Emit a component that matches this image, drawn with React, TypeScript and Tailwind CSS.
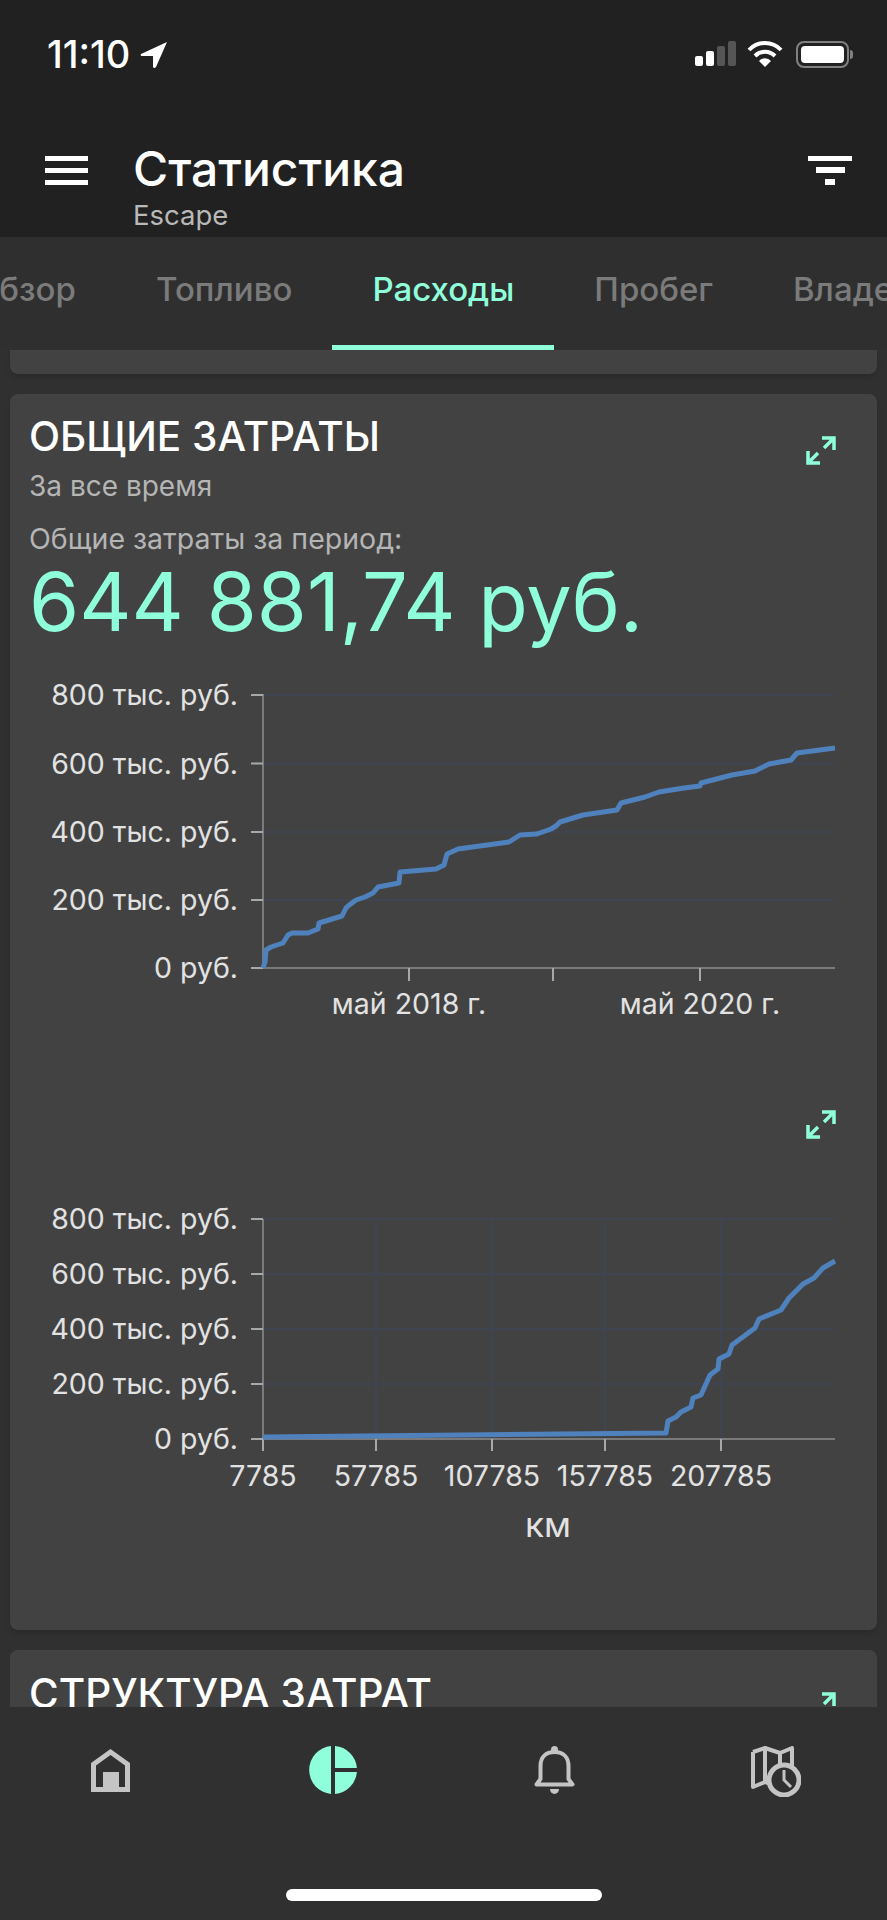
const mint = '#8fffdb';

// traced from the reference, in page coordinates
const costByDate: [number, number][] = [
  [263, 968], [265, 962], [266, 950], [271, 947], [283, 943], [288, 935], [292, 933], [308, 933], [318, 929], [319, 923], [342, 916], [346, 908], [348, 906], [356, 900], [365, 897], [373, 893], [378, 887], [399, 883], [400, 872], [436, 869], [444, 865], [447, 854], [458, 849], [509, 842], [520, 835], [537, 834], [551, 829], [556, 826], [560, 822], [583, 815], [617, 810], [621, 803], [645, 797], [659, 792], [684, 788], [700, 786], [701, 783], [732, 775], [755, 771], [769, 764], [791, 760], [797, 753], [835, 748],
];

const costByMileage: [number, number][] = [
  [263, 1437], [666, 1433], [668, 1421], [676, 1417], [681, 1412], [691, 1407], [693, 1398], [701, 1395], [710, 1375], [718, 1369], [719, 1359], [729, 1354], [732, 1345], [755, 1328], [759, 1319], [781, 1310], [789, 1298], [803, 1284], [814, 1278], [823, 1268], [835, 1261],
];

const toPath = (pts: [number, number][]) => pts.map(([x, y], i) => `${i === 0 ? 'M' : 'L'}${x} ${y}`).join(' ');

const yLabels = ['800 тыс. руб.', '600 тыс. руб.', '400 тыс. руб.', '200 тыс. руб.', '0 руб.'];

function ExpandIcon() {
  return (
    <svg width="30" height="29" viewBox="0 0 30 29" fill="none" stroke={mint} strokeWidth="3.5" className="shrink-0">
      <path d="M16 2 H28 V14 M28 2 L18 12" />
      <path d="M14 27 H2 V15 M2 27 L12 17" />
    </svg>
  );
}

function DateChart() {
  const rows = [695, 763.5, 832, 900, 968];
  return (
    <svg width="867" height="340" viewBox="10 680 867 340" className="shrink-0 -ml-[19px]">
      {rows.slice(0, 4).map((y) => (
        <line key={y} x1="263" x2="835" y1={y} y2={y} stroke="#3f4453" strokeWidth="2" />
      ))}
      <line x1="263" x2="263" y1="694" y2="968" stroke="#7a7a7a" strokeWidth="2" />
      <line x1="263" x2="835" y1="968" y2="968" stroke="#7a7a7a" strokeWidth="2" />
      {rows.map((y) => (
        <line key={y} x1="251" x2="263" y1={y} y2={y} stroke="#a8a8a8" strokeWidth="2" />
      ))}
      {[409, 553, 700].map((x) => (
        <line key={x} x1={x} x2={x} y1="968" y2="981" stroke="#a8a8a8" strokeWidth="2" />
      ))}
      {yLabels.map((t, i) => (
        <text key={t} x="238" y={rows[i] + 10} textAnchor="end" fontSize="28.5" fill="#e2e2e2">{t}</text>
      ))}
      <text x="409" y="1014" textAnchor="middle" fontSize="28.5" fill="#e2e2e2">май 2018 г.</text>
      <text x="700" y="1014" textAnchor="middle" fontSize="28.5" fill="#e2e2e2">май 2020 г.</text>
      <path d={toPath(costByDate)} fill="none" stroke="#4f81bd" strokeWidth="5" strokeLinejoin="round" />
    </svg>
  );
}

function MileageChart() {
  const rows = [1219, 1274, 1329, 1384, 1439];
  const cols = [263, 376, 492, 605, 721];
  const xLabels = ['7785', '57785', '107785', '157785', '207785'];
  return (
    <svg width="867" height="401" viewBox="10 1139 867 401" className="shrink-0 -ml-[19px]">
      {rows.slice(0, 4).map((y) => (
        <line key={y} x1="263" x2="835" y1={y} y2={y} stroke="#3f4453" strokeWidth="2" />
      ))}
      {cols.slice(1).map((x) => (
        <line key={x} x1={x} x2={x} y1="1219" y2="1439" stroke="#3f4453" strokeWidth="2" />
      ))}
      <line x1="263" x2="263" y1="1219" y2="1439" stroke="#7a7a7a" strokeWidth="2" />
      <line x1="263" x2="835" y1="1439" y2="1439" stroke="#7a7a7a" strokeWidth="2" />
      {rows.map((y) => (
        <line key={y} x1="251" x2="263" y1={y} y2={y} stroke="#a8a8a8" strokeWidth="2" />
      ))}
      {cols.map((x) => (
        <line key={x} x1={x} x2={x} y1="1439" y2="1451" stroke="#a8a8a8" strokeWidth="2" />
      ))}
      {yLabels.map((t, i) => (
        <text key={t} x="238" y={rows[i] + 10} textAnchor="end" fontSize="28.5" fill="#e2e2e2">{t}</text>
      ))}
      {xLabels.map((t, i) => (
        <text key={t} x={cols[i]} y="1486" textAnchor="middle" fontSize="28.5" fill="#e2e2e2">{t}</text>
      ))}
      <text x="548" y="1537" textAnchor="middle" fontSize="35" fill="#e2e2e2">км</text>
      <path d={toPath(costByMileage)} fill="none" stroke="#4f81bd" strokeWidth="5" strokeLinejoin="round" />
    </svg>
  );
}

function StatusBar() {
  return (
    <div className="flex h-[139px] items-start justify-between pl-[47px] pr-[34px] pt-[41px]">
      <div className="flex w-[121px] items-center justify-between">
        <span className="text-[38px] leading-[27px] font-medium text-white">11:10</span>
        <svg width="28" height="27" viewBox="0 0 28 27" fill="white">
          <path d="M27 1 L1 13 Q0 15 2 15 L13 15 L13 26 Q14 28 16 26 Z" />
        </svg>
      </div>
      <div className="flex items-start">
        <svg width="41" height="26" viewBox="0 0 41 26" className="mr-[11px]">
          <rect x="0" y="15" width="8" height="10" rx="2" fill="white" />
          <rect x="11" y="10" width="8" height="15" rx="2" fill="white" />
          <rect x="22" y="5" width="8" height="20" rx="2" fill="#555" />
          <rect x="33" y="0" width="8" height="25" rx="2" fill="#555" />
        </svg>
        <svg width="36" height="26" viewBox="0 0 36 26" fill="none" stroke="white" strokeWidth="4" className="mr-[13px]">
          <path d="M2 9 A22 22 0 0 1 34 9" />
          <path d="M8 15 A14 14 0 0 1 28 15" />
          <path d="M18 26 L12 20 A8 8 0 0 1 24 20 Z" fill="white" stroke="none" />
        </svg>
        <div className="flex items-center">
          <div className="h-[27px] w-[53px] rounded-[8px] border-2 border-[#808080] p-[3px]">
            <div className="h-full w-full rounded-[4px] bg-white" />
          </div>
          <div className="ml-[1px] h-[9px] w-[3px] rounded-r-full bg-[#808080]" />
        </div>
      </div>
    </div>
  );
}

function AppBar() {
  return (
    <div className="flex items-start pl-[45px] pr-[35px]">
      <div className="mt-[17px] flex w-[43px] flex-col gap-[7px]">
        <div className="h-[5px] bg-white" />
        <div className="h-[5px] bg-white" />
        <div className="h-[5px] bg-white" />
      </div>
      <div className="ml-[45px] flex-1">
        <div className="text-[48px] leading-[60px] font-medium text-white">Статистика</div>
        <div className="text-[27.5px] leading-[32px] text-[#b9b9b9]">Escape</div>
      </div>
      <div className="mt-[17px] flex w-[44px] flex-col items-center gap-[6px]">
        <div className="h-[5px] w-[44px] bg-white" />
        <div className="h-[6px] w-[29px] bg-white" />
        <div className="h-[6px] w-[10px] bg-white" />
      </div>
    </div>
  );
}

function Tabs() {
  const tabs = ['Обзор', 'Топливо', 'Расходы', 'Пробег', 'Владелец'];
  return (
    <div className="flex h-[113px] shrink-0 overflow-hidden bg-[#2f2f2f]">
      <div className="-ml-[66px] flex shrink-0">
        {tabs.map((t) => {
          const active = t === 'Расходы';
          return (
            <div
              key={t}
              className={
                active
                  ? 'flex h-full shrink-0 items-center border-b-[5px] border-[#8fffdb] px-[40px] pb-[2px] text-[33px] font-medium text-[#8fffdb]'
                  : 'flex h-full shrink-0 items-center border-b-[5px] border-transparent px-[40px] pb-[2px] text-[33px] font-medium text-[#7b7b7b]'
              }
            >
              {t}
            </div>
          );
        })}
      </div>
    </div>
  );
}

function BottomNav() {
  return (
    <div className="relative flex h-[213px] shrink-0 flex-col bg-[#303030]">
      <div className="grid grid-cols-4 pt-[39px]">
        <div className="flex justify-center">
          <svg width="39" height="43" viewBox="0 0 39 43" className="mt-[3px]" fill="#c4c4c4">
            <path fillRule="evenodd" d="M19.5 0 L39 14 V43 H0 V14 Z M19.5 6 L5 16.5 V38 H12 V23 H28 V38 H34 V16.5 Z" />
          </svg>
        </div>
        <div className="flex justify-center">
          <svg width="48" height="48" viewBox="0 0 48 48" fill={mint}>
            <path d="M22 0.1 A24 24 0 0 0 22 47.9 Z" />
            <path d="M26 0.1 A24 24 0 0 1 47.9 22 H26 Z" />
            <path d="M26 47.9 A24 24 0 0 0 47.9 26 H26 Z" />
          </svg>
        </div>
        <div className="flex justify-center">
          <svg width="41" height="48" viewBox="0 0 41 48" fill="none" stroke="#c4c4c4" strokeWidth="4">
            <path d="M6.5 33 V20 C6.5 11 12 6 20.5 6 C29 6 34.5 11 34.5 20 V33 L38.5 38.5 H2.5 Z" strokeLinejoin="round" />
            <circle cx="20.5" cy="3.5" r="3.5" fill="#c4c4c4" stroke="none" />
            <path d="M16 43 H25 A4.5 5 0 0 1 16 43 Z" fill="#c4c4c4" stroke="none" />
          </svg>
        </div>
        <div className="flex justify-center">
          <svg width="50" height="51" viewBox="0 0 50 51" fill="none" stroke="#c4c4c4" strokeWidth="4">
            <path d="M2 6 L14 2 L29 7 L41 2 V24 M2 6 V41 L14 36 L20 38 M14 2 V36 M29 7 V20" strokeLinejoin="round" />
            <circle cx="33" cy="34" r="15" fill="#303030" strokeWidth="5" />
            <path d="M33 24 V34 L40 41" strokeWidth="3" />
          </svg>
        </div>
      </div>
      <div className="absolute bottom-[19px] left-[286px] h-[12px] w-[316px] rounded-full bg-white" />
    </div>
  );
}

export default function App() {
  return (
    <div className="flex h-[1920px] w-[887px] flex-col overflow-hidden bg-[#303030] font-['Inter','Liberation_Sans',sans-serif]">
      <div className="h-[237px] shrink-0 bg-[#212121]">
        <StatusBar />
        <AppBar />
      </div>
      <Tabs />
      <main className="flex min-h-0 flex-1 flex-col gap-[20px] overflow-hidden px-[10px]">
        <div className="h-[24px] shrink-0 rounded-b-lg bg-[#424242] shadow-md" />
        <section className="h-[1236px] shrink-0 rounded-lg bg-[#424242] pl-[19px] pr-[41px] pt-[21px] shadow-md">
          <div className="flex items-start justify-between">
            <div>
              <h2 className="text-[40.5px] leading-[44px] font-medium text-white">ОБЩИЕ ЗАТРАТЫ</h2>
              <p className="mt-[12px] text-[28px] leading-[30px] text-[#b5b5b5]">За все время</p>
            </div>
            <div className="mt-[21px]">
              <ExpandIcon />
            </div>
          </div>
          <p className="mt-[23px] text-[28.5px] leading-[30px] text-[#b5b5b5]">Общие затраты за период:</p>
          <p className="mt-[3px] text-[81px] leading-[90px] text-[#8fffdb]">644 881,74 руб.</p>
          <div className="mt-[33px]">
            <DateChart />
          </div>
          <div className="mt-[90px] flex justify-end">
            <ExpandIcon />
          </div>
          <MileageChart />
        </section>
        <section className="shrink-0 rounded-t-lg bg-[#424242] pl-[19px] pr-[41px] pt-[22px]">
          <div className="flex items-start justify-between">
            <h2 className="text-[40.5px] leading-[44px] font-medium text-white">СТРУКТУРА ЗАТРАТ</h2>
            <div className="mt-[20px]">
              <ExpandIcon />
            </div>
          </div>
        </section>
      </main>
      <BottomNav />
    </div>
  );
}
